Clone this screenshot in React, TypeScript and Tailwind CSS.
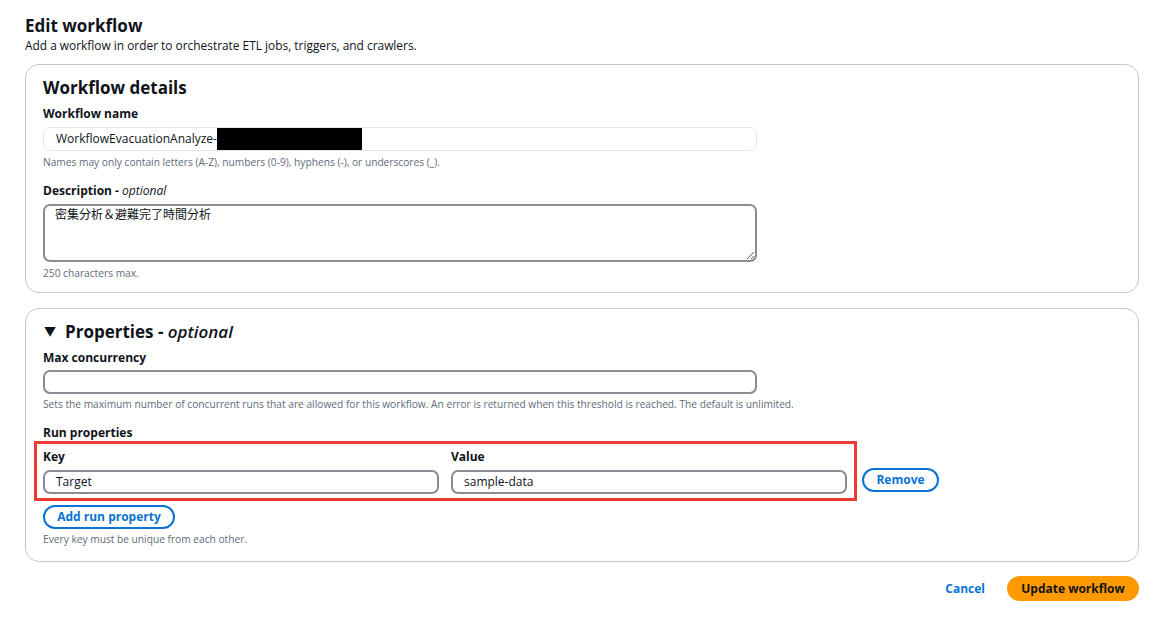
import React from "react";

const font = "font-['Open_Sans','Noto_Sans_CJK_JP',sans-serif]";

function Label({ children }: { children: React.ReactNode }) {
    return <div className="text-[12px] font-bold text-[#0f141a] leading-[16px]">{children}</div>;
}

function Hint({ children }: { children: React.ReactNode }) {
    return <div className="text-[10.2px] text-[#5f6b7a] leading-[14px]">{children}</div>;
}

function Field({ value, className = "" }: { value?: string; className?: string }) {
    return (
        <div
            className={`h-[24px] rounded-[7px] border-2 border-[#8c8c94] bg-white px-[11px] flex items-center text-[12px] text-[#0f141a] ${className}`}
        >
            {value}
        </div>
    );
}

export default function App() {
    return (
        <div className={`${font} bg-white min-h-[617px] w-[1169px] pl-[25px] pr-[30px] pt-[15px]`}>
            <h1 className="text-[17px] font-bold text-[#0f141a] leading-[22px]">Edit workflow</h1>
            <p className="text-[11.9px] text-[#0f141a] leading-[16px]">
                Add a workflow in order to orchestrate ETL jobs, triggers, and crawlers.
            </p>

            {/* workflow details */}
            <section className="mt-[11px] h-[229px] rounded-[14px] border border-[#c6c6cd] px-[17px] pt-[12px]">
                <h2 className="text-[17px] font-bold text-[#0f141a] leading-[22px]">Workflow details</h2>
                <div className="mt-[7px]">
                    <Label>Workflow name</Label>
                </div>
                <div className="mt-[5px] w-[714px] h-[24px] rounded-[7px] border border-[#e3e5e8] bg-white pl-[12px] flex items-center text-[12px] text-[#0f141a]">
                    <span>WorkflowEvacuationAnalyze-</span>
                    <span className="inline-block w-[145px] h-[22px] bg-black"></span>
                </div>
                <div className="mt-[4px]">
                    <Hint>Names may only contain letters (A-Z), numbers (0-9), hyphens (-), or underscores (_).</Hint>
                </div>
                <div className="mt-[14px]">
                    <Label>
                        Description - <span className="italic font-normal">optional</span>
                    </Label>
                </div>
                <textarea
                    className="mt-[5px] block w-[714px] h-[58px] rounded-[7px] border-2 border-[#8c8c94] px-[10px] py-[1px] text-[12px] text-[#0f141a] leading-[16px] outline-none"
                    defaultValue="密集分析＆避難完了時間分析"
                />
                <div className="mt-[4px]">
                    <Hint>250 characters max.</Hint>
                </div>
            </section>

            {/* properties */}
            <section className="mt-[15px] h-[254px] rounded-[14px] border border-[#c6c6cd] px-[17px] pt-[12px]">
                <h2 className="flex items-center text-[17px] font-bold text-[#0f141a] leading-[22px]">
                    <span className="text-[12px] ml-[1px] mr-[9px]">▼</span>
                    Properties -&nbsp;<span className="italic font-semibold">optional</span>
                </h2>
                <div className="mt-[7px]">
                    <Label>Max concurrency</Label>
                </div>
                <Field className="mt-[4px] w-[714px]" />
                <div className="mt-[3px]">
                    <Hint>
                        Sets the maximum number of concurrent runs that are allowed for this workflow. An error is
                        returned when this threshold is reached. The default is unlimited.
                    </Hint>
                </div>
                <div className="mt-[14px]">
                    <Label>Run properties</Label>
                </div>
                <div className="flex items-end gap-[5px]">
                    <div className="-ml-[9px] w-[823px] h-[60px] border-[3px] border-[#ec3b32] pl-[6px] pr-[7px] pt-[5px] flex gap-[12px]">
                        <div className="flex-1">
                            <Label>Key</Label>
                            <Field value="Target" className="mt-[5px]" />
                        </div>
                        <div className="flex-1">
                            <Label>Value</Label>
                            <Field value="sample-data" className="mt-[5px]" />
                        </div>
                    </div>
                    <button className="mb-[9px] h-[24px] w-[77px] rounded-full border-2 border-[#0972d3] text-[12px] font-bold text-[#0972d3]">
                        Remove
                    </button>
                </div>
                <button className="mt-[4px] h-[24px] w-[132px] rounded-full border-2 border-[#0972d3] text-[12px] font-bold text-[#0972d3]">
                    Add run property
                </button>
                <div className="mt-[3px]">
                    <Hint>Every key must be unique from each other.</Hint>
                </div>
            </section>

            <div className="mt-[14px] flex items-center justify-end gap-[22px]">
                <button className="text-[12px] font-bold text-[#0972d3]">Cancel</button>
                <button className="h-[25px] w-[132px] rounded-full bg-[#ff9900] text-[12px] font-bold text-[#0f141a]">
                    Update workflow
                </button>
            </div>
        </div>
    );
}
